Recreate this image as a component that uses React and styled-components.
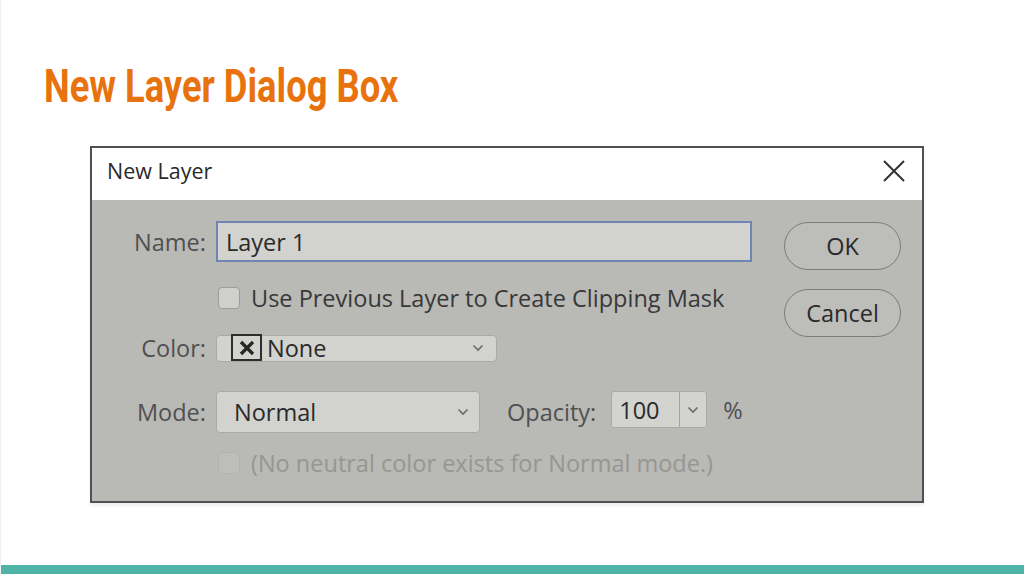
import React from 'react'
import styled, { createGlobalStyle } from 'styled-components'

const Global = createGlobalStyle`
  html, body {
    margin: 0;
    padding: 0;
    background: #ffffff;
  }
  * {
    box-sizing: border-box;
  }
`

const Slide = styled.div`
  width: 1024px;
  height: 574px;
  display: flex;
  flex-direction: column;
  align-items: flex-start;
  background: #fff;
  border-left: 1px solid #f0f0f0;
  overflow: hidden;
`

// no condensed face installed, so squeeze a bold sans horizontally
const Title = styled.h1`
  display: inline-block;
  margin: 60px 0 0 43px;
  font-family: Roboto, "Liberation Sans", sans-serif;
  font-weight: 700;
  font-size: 46px;
  line-height: 52px;
  color: #e8730e;
  white-space: nowrap;
  transform: scaleX(0.79);
  transform-origin: left center;
`

const Dialog = styled.div`
  margin: 34px 0 0 89px;
  width: 834px;
  height: 357px;
  border: 2px solid #505050;
  background: #b9b9b6;
  display: flex;
  flex-direction: column;
  font-family: "Open Sans", "Noto Sans", sans-serif;
  font-size: 23.5px;
  box-shadow: 0 3px 3px rgba(0, 0, 0, 0.06);
`

const TitleBar = styled.div`
  height: 52px;
  background: #ffffff;
  display: flex;
  align-items: center;
  justify-content: space-between;
  padding: 0 17px 7px 15px;
  font-size: 21.5px;
  color: #2a2a2a;
`

const Body = styled.div`
  flex: 1;
  display: flex;
  padding: 21px 21px 0 0;
`

const Form = styled.div`
  flex: 1;
  display: flex;
  flex-direction: column;
`

const Row = styled.div`
  display: flex;
  align-items: center;
  height: ${p => p.h}px;
  margin-top: ${p => p.top || 0}px;
`

const Label = styled.div`
  width: 114px;
  margin-right: 10px;
  text-align: right;
  color: #505050;
  white-space: nowrap;
`

const Spacer = styled.div`
  width: 125px;
  flex: none;
`

const NameInput = styled.div`
  width: 536px;
  height: 41px;
  border: 2px solid #6f86b4;
  background: #d2d2ce;
  display: flex;
  align-items: center;
  padding-left: 8px;
  color: #2a2a2a;
`

const Check = styled.div`
  width: 22px;
  height: 22px;
  border-radius: 4px;
  border: 1px solid ${p => (p.disabled ? '#b2b2ae' : '#9c9c98')};
  background: ${p => (p.disabled ? '#bdbdb9' : '#cfcfcb')};
  margin: 0 11px 0 1px;
  flex: none;
`

const CheckText = styled.div`
  color: ${p => (p.disabled ? '#969692' : '#383838')};
  white-space: nowrap;
`

const Select = styled.div`
  width: ${p => p.w}px;
  height: ${p => p.h}px;
  background: #d2d2ce;
  border: 1px solid #a9a9a5;
  border-radius: 4px;
  display: flex;
  align-items: center;
  padding: 0 ${p => p.pr}px 0 ${p => p.pl}px;
  color: #2a2a2a;
  flex: none;
`

const SelectText = styled.span`
  flex: 1;
`

const Swatch = styled.div`
  width: 31px;
  height: 27px;
  border: 2px solid #2e2e2e;
  display: flex;
  align-items: center;
  justify-content: center;
  margin-right: 5px;
  margin-top: -1px;
  flex: none;
`

const OpacityLabel = styled.div`
  margin: 0 15px 0 27px;
  color: #505050;
  white-space: nowrap;
`

const NumberBox = styled.div`
  width: 96px;
  height: 37px;
  margin-top: -5px;
  background: #d3d3cf;
  border: 1px solid #a9a9a5;
  border-radius: 3px;
  display: flex;
  color: #2a2a2a;
  flex: none;
`

const NumberValue = styled.div`
  width: 68px;
  border-right: 1px solid #a4a4a0;
  display: flex;
  align-items: center;
  padding-left: 7px;
`

const NumberArrow = styled.div`
  flex: 1;
  display: flex;
  align-items: center;
  justify-content: center;
`

const Percent = styled.div`
  margin-left: 16px;
  margin-top: -5px;
  color: #505050;
`

const Buttons = styled.div`
  width: 117px;
  display: flex;
  flex-direction: column;
  gap: 19px;
  padding-top: 1px;
`

const Button = styled.div`
  height: 48px;
  border: 1px solid #7c7c78;
  border-radius: 24px;
  background: #bdbdb9;
  display: flex;
  align-items: center;
  justify-content: center;
  color: #2a2a2a;
`

const BottomBar = styled.div`
  align-self: stretch;
  margin-top: auto;
  height: 9px;
  background: #4fb3a8;
`

const Chevron = () => (
  <svg width="12" height="8" viewBox="0 0 12 8">
    <path d="M1.5 1.5 L6 6 L10.5 1.5" fill="none" stroke="#6a6a6a" strokeWidth="1.6" />
  </svg>
)

const CloseIcon = () => (
  <svg width="22" height="22" viewBox="0 0 22 22">
    <path d="M1 1 L21 21 M21 1 L1 21" stroke="#333" strokeWidth="2" />
  </svg>
)

const SwatchX = () => (
  <svg width="16" height="16" viewBox="0 0 16 16">
    <path d="M2 2 L14 14 M14 2 L2 14" stroke="#262626" strokeWidth="3.2" />
  </svg>
)

export default function App() {
  return (
    <Slide>
      <Global />
      <Title>New Layer Dialog Box</Title>
      <Dialog>
        <TitleBar>
          <span>New Layer</span>
          <CloseIcon />
        </TitleBar>
        <Body>
          <Form>
            <Row h={41}>
              <Label>Name:</Label>
              <NameInput>Layer 1</NameInput>
            </Row>
            <Row h={26} top={23}>
              <Spacer />
              <Check />
              <CheckText>Use Previous Layer to Create Clipping Mask</CheckText>
            </Row>
            <Row h={26} top={24}>
              <Label>Color:</Label>
              <Select w={281} h={27} pl={14} pr={12}>
                <Swatch>
                  <SwatchX />
                </Swatch>
                <SelectText>None</SelectText>
                <Chevron />
              </Select>
            </Row>
            <Row h={42} top={30}>
              <Label>Mode:</Label>
              <Select w={264} h={42} pl={17} pr={10}>
                <SelectText>Normal</SelectText>
                <Chevron />
              </Select>
              <OpacityLabel>Opacity:</OpacityLabel>
              <NumberBox>
                <NumberValue>100</NumberValue>
                <NumberArrow>
                  <Chevron />
                </NumberArrow>
              </NumberBox>
              <Percent>%</Percent>
            </Row>
            <Row h={26} top={17}>
              <Spacer />
              <Check disabled />
              <CheckText disabled>(No neutral color exists for Normal mode.)</CheckText>
            </Row>
          </Form>
          <Buttons>
            <Button>OK</Button>
            <Button>Cancel</Button>
          </Buttons>
        </Body>
      </Dialog>
      <BottomBar />
    </Slide>
  )
}
